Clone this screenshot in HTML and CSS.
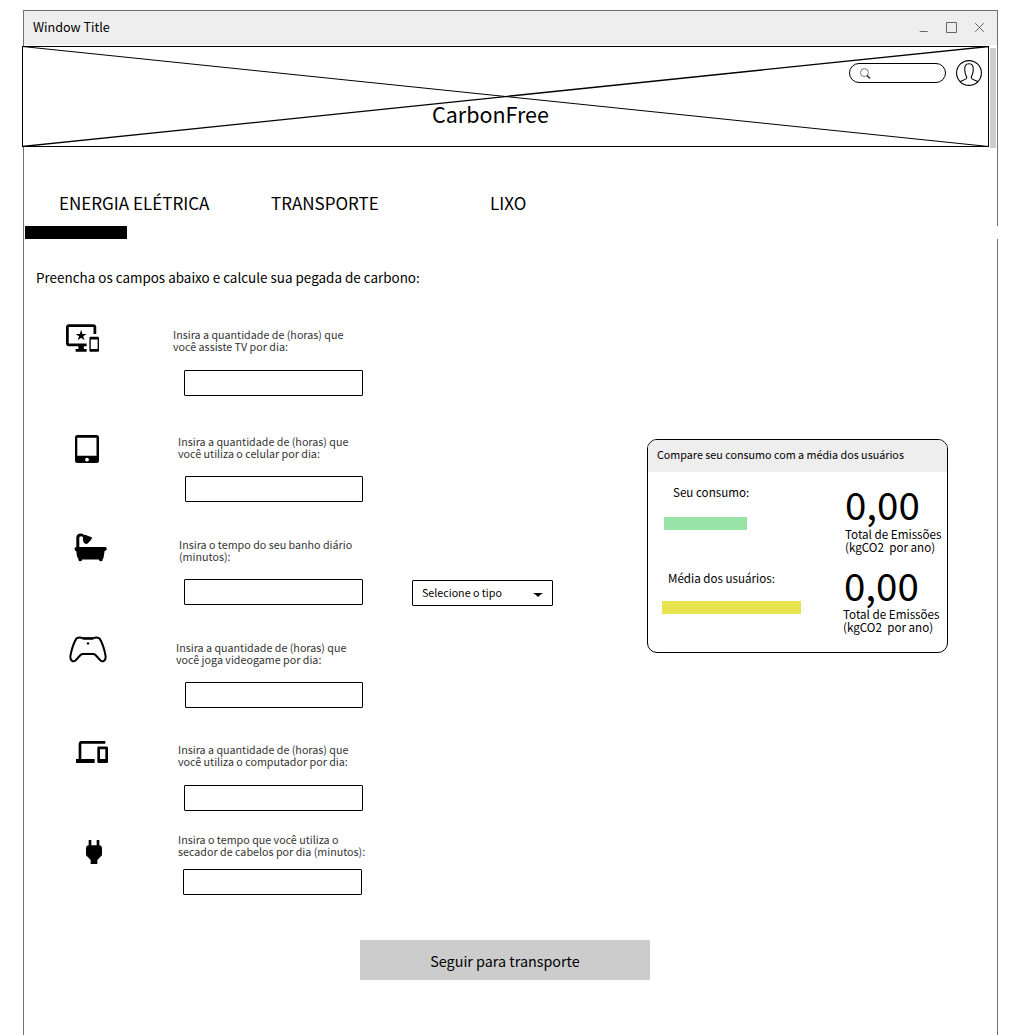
FILE: index.html
```html
<!DOCTYPE html>
<html lang="pt-BR">
<head>
<meta charset="utf-8">
<title>CarbonFree</title>
<link rel="stylesheet" href="styles.css">
</head>
<body>
<div class="window">
  <header class="titlebar">
    <span class="titlebar-text">Window Title</span>
    <svg class="controls" width="66" height="14" viewBox="0 0 66 14">
      <path d="M.7 10.5H8.700M27.500 1.500H37.500V11.500H27.500ZM56.200 2.200L64.800 10.800M64.800 2.200L56.200 10.800"/>
    </svg>
  </header>

  <div class="banner-row">
    <div class="banner">
      <svg class="cross" viewBox="0 0 967 101" preserveAspectRatio="none">
        <path d="M0.500 0.500L966.500 100.500"/><path class="bold" d="M0.500 100.500L966.500 0.500"/>
      </svg>
      <h1 class="brand">CarbonFree</h1>
      <div class="banner-tools">
        <div class="search">
          <svg width="12" height="13" viewBox="0 0 12 13"><circle cx="4.400" cy="4.600" r="4"/><path class="handle" d="M7 7.400L10 10.600"/></svg>
        </div>
        <svg class="avatar" width="26" height="26" viewBox="0 0 26 26">
          <circle cx="13" cy="13" r="12.400"/>
          <path d="M4.200 21.800C6 20.200 10.500 20 10.800 17.800C11 16 8.800 15 8.800 10.500C8.300 6 9.500 3.800 13 3.800S17.700 6 17.200 10.500C17.200 15 15 16 15.200 17.800C15.500 20 20 20.200 21.800 21.800"/>
        </svg>
      </div>
    </div>
    <div class="scrollbar"></div>
  </div>

  <nav class="tabs">
    <a class="tab tab-energy">ENERGIA ELÉTRICA</a>
    <a class="tab tab-transport">TRANSPORTE</a>
    <a class="tab">LIXO</a>
  </nav>
  <div class="track"><div class="track-fill"></div></div>

  <p class="intro">Preencha os campos abaixo e calcule sua pegada de carbono:</p>

  <main class="main">
    <form class="form">
      <div class="field field-tv">
        <div class="icon"><svg width="33" height="28" viewBox="0 2 24 20"><path d="M23 11.010L18 11c-.55 0-1 .45-1 1v9c0 .55.45 1 1 1h5c.55 0 1-.45 1-1v-9c0-.55-.45-.99-1-.99zM23 20h-5v-7h5v7zM20 2H2C.89 2 0 2.890 0 4v12c0 1.100.89 2 2 2h7v2H7v2h8v-2h-2v-2h2v-2H2V4h18v5h2V4c0-1.110-.9-2-2-2zm-8.030 7L11 6l-.97 3H7l2.470 1.760-.94 2.910 2.470-1.800 2.470 1.800-.94-2.910L15 9h-3.030z"/></svg></div>
        <div class="control">
          <label>Insira a quantidade de (horas) que<br>você assiste TV por dia:</label>
          <div class="input"></div>
        </div>
      </div>
      <div class="field field-phone">
        <div class="icon"><svg width="24" height="28" viewBox="0 0 24 28"><path fill-rule="evenodd" d="M2.500 0H21.500Q24 0 24 2.500V25.500Q24 28 21.500 28H2.500Q0 28 0 25.500V2.500Q0 0 2.500 0ZM2.300 2.800V20.800H21.500V2.800ZM12 22.700a1.900 1.900 0 1 0 .01 0Z"/></svg></div>
        <div class="control">
          <label>Insira a quantidade de (horas) que<br>você utiliza o celular por dia:</label>
          <div class="input"></div>
        </div>
      </div>
      <div class="field field-bath">
        <div class="icon"><svg width="33" height="29" viewBox="0 0 33 29"><path d="M2.300 15V4.500C2.300 .5 7.500-.8 9.800 2L11 1.700L18.200 4.600C17.500 7 15 9.500 12.500 11.300L10.200 10C8.800 8 8.800 6 9 4.200C7.500 2.500 5.300 3 5.300 5.200V14H31.500Q33 14.500 32.600 17L30.600 18L29.500 25L28.600 26.200V27.500Q28 28.500 26.500 28.300Q25 28.300 24.900 26.500H8V27.500Q7 28.700 5.300 28Q4.300 27.500 4.500 26L3 23.500L2.300 18.200Q.5 18 .5 15.500Q.5 14 2.300 14Z"/></svg></div>
        <div class="control">
          <label>Insira o tempo do seu banho diário<br>(minutos):</label>
          <div class="input"></div>
        </div>
        <div class="select"><span>Selecione o tipo</span><svg width="10" height="4" viewBox="0 0 9 4" preserveAspectRatio="none"><path d="M0 0H9Q7 1 4.500 4Q2 1 0 0Z"/></svg></div>
      </div>
      <div class="field field-game">
        <div class="icon"><svg class="outline" width="38" height="27" viewBox="0 0 38 27"><path d="M7.500 2.400C9.500 1.300 12 1.300 13.700 2.300H24.300C26 1.300 28.500 1.300 30.500 2.400C33.500 7 35.500 14 36.600 20C37 24.500 34 26.500 31.500 24.500L26.500 19Q25.500 18 24 18H14Q12.500 18 11.500 19L6.500 24.500C4 26.500 1 24.500 1.400 20C2.500 14 4.500 7 7.500 2.400Z"/><path class="accent" d="M14 2.600H24"/><circle cx="19" cy="7.400" r="1.200"/></svg></div>
        <div class="control">
          <label>Insira a quantidade de (horas) que<br>você joga videogame por dia:</label>
          <div class="input"></div>
        </div>
      </div>
      <div class="field field-computer">
        <div class="icon"><svg width="32" height="22" viewBox="0 4 24 16" preserveAspectRatio="none"><path d="M4 6h18V4H4c-1.100 0-2 .9-2 2v11H0v3h14v-3H4V6zm19 2h-6c-.55 0-1 .45-1 1v10c0 .55.45 1 1 1h6c.55 0 1-.45 1-1V9c0-.55-.45-1-1-1zm-1 9h-4v-7h4v7z"/></svg></div>
        <div class="control">
          <label>Insira a quantidade de (horas) que<br>você utiliza o computador por dia:</label>
          <div class="input"></div>
        </div>
      </div>
      <div class="field field-dryer">
        <div class="icon"><svg width="16" height="24" viewBox="6 3 12 18"><path d="M16.010 7L16 3h-2v4h-4V3H8v4h-.01C7 6.990 6 7.990 6 8.990v5.490L9.500 18v3h5v-3l3.500-3.510v-5.500c0-1-1-2-1.990-1.990z"/></svg></div>
        <div class="control">
          <label>Insira o tempo que você utiliza o<br>secador de cabelos por dia (minutos):</label>
          <div class="input"></div>
        </div>
      </div>
    </form>

    <aside class="card">
      <h2 class="card-title">Compare seu consumo com a média dos usuários</h2>
      <div class="card-body">
        <div class="bars">
          <div class="bar-label mine">Seu consumo:</div>
          <div class="bar bar-mine"></div>
          <div class="bar-label average">Média dos usuários:</div>
          <div class="bar bar-average"></div>
        </div>
        <div class="totals">
          <div class="total">
            <div class="number">0,00</div>
            <div class="unit">Total de Emissões<br>(kgCO2&nbsp; por ano)</div>
          </div>
          <div class="total total-average">
            <div class="number">0,00</div>
            <div class="unit">Total de Emissões<br>(kgCO2&nbsp; por ano)</div>
          </div>
        </div>
      </div>
    </aside>
  </main>

  <button class="next" type="button">Seguir para transporte</button>
</div>
</body>
</html>
```
FILE: styles.css
```css
* { box-sizing: border-box; }
body {
  margin: 0;
  padding: 10px 16px 0 23px;
  height: 1035px;
  overflow: hidden;
  background: #fff;
  color: #000;
  font-family: "Noto Sans CJK SC", "Noto Sans", sans-serif;
}
h1, h2, p { margin: 0; font-weight: 400; }
svg { display: block; flex: none; }

.window {
  width: 975px;
  height: 1025px;
  border: 1px solid #707070;
  border-bottom: 0;
}
.titlebar {
  display: flex;
  justify-content: space-between;
  height: 34px;
  padding: 0 12px 0 9px;
  background: #eee;
}
.titlebar-text { font-size: 12.600px; line-height: 31px; }
.controls { margin-top: 10px; fill: none; stroke: #666; }

.banner-row { display: flex; gap: 1px; margin: 1px 0 0 -2px; }
.banner {
  position: relative;
  display: flex;
  justify-content: space-between;
  width: 967px;
  height: 101px;
  padding: 13px 6px 0 409px;
  border: 1px solid #000;
  background: #fff;
}
.cross {
  position: absolute;
  top: -1px;
  left: -1px;
  width: 967px;
  height: 101px;
  fill: none;
  stroke: #000;
}
.cross .bold { stroke-width: 1.3; }
.brand { margin-top: 38px; font-size: 21.500px; line-height: 31px; }
.banner-tools { position: relative; display: flex; gap: 10px; }
.search {
  width: 97px;
  height: 20px;
  margin-top: 3px;
  padding: 4px 0 0 10px;
  border: 1px solid #000;
  border-radius: 10px;
}
.search svg { fill: none; stroke: #555; stroke-width: .8; }
.search .handle { stroke: #222; stroke-width: 1.400; }
.avatar { fill: none; stroke: #000; stroke-width: 1.100; }
.scrollbar { width: 6px; height: 100px; margin-top: 2px; background: #ccc; }

.tabs { display: flex; height: 78px; padding: 42px 0 0 35px; }
.tab { font-size: 17px; line-height: 25px; white-space: nowrap; }
.tab-energy { width: 212px; }
.tab-transport { width: 219px; }
.track { height: 13px; margin-right: -1px; padding-left: 1px; background: #fff; }
.track-fill { width: 102px; height: 13px; background: #000; }

.intro { margin: 28px 0 0 12px; font-size: 13.450px; line-height: 20px; white-space: nowrap; }

.main { display: flex; align-items: flex-start; margin-top: 42px; }
.form { width: 623px; }
.field { display: flex; height: 67px; }
.icon { width: 149px; padding-left: 42px; }
.control label {
  display: block;
  font-size: 10.730px;
  line-height: 12px;
  color: #333;
  white-space: nowrap;
}
.input { width: 179px; height: 26px; margin: 17px 0 0 11px; border: 1px solid #000; border-radius: 1px; }

.field-tv .icon svg { margin-top: -5px; }
.field-phone { height: 66px; margin-top: 40px; }
.field-phone .icon { width: 154px; padding-left: 51px; }
.field-phone .icon svg { margin-top: -1px; }
.field-phone .input { width: 178px; margin: 16px 0 0 7px; }
.field-bath { height: 66px; margin-top: 37px; }
.field-bath .icon { width: 155px; padding-left: 49.500px; }
.field-bath .icon svg { margin-top: -6px; }
.field-bath .control { width: 184px; }
.field-bath .input { margin: 16px 0 0 5px; }
.field-game { height: 66px; margin-top: 37px; }
.field-game .icon { width: 152px; padding-left: 44.500px; }
.field-game .icon svg { margin-top: -6px; }
.field-game .input { width: 178px; margin: 16px 0 0 9px; }
.field-computer { margin-top: 36px; }
.field-computer .icon { width: 154px; padding-left: 52px; }
.field-computer .icon svg { margin-top: -3px; }
.field-computer .input { margin-left: 6px; }
.field-dryer { height: 61px; margin-top: 23px; }
.field-dryer .icon { width: 154px; padding-left: 62px; }
.field-dryer .icon svg { margin-top: 6px; }
.field-dryer .input { margin: 11px 0 0 5px; }

.outline { fill: none; stroke: #000; stroke-width: 2; }
.outline .accent { stroke-width: 2.200; }
.outline circle { fill: #000; stroke: none; }

.select {
  display: flex;
  justify-content: space-between;
  align-items: flex-start;
  width: 141px;
  height: 26px;
  margin: 41px 0 0 49px;
  padding: 0 9px;
  border: 1px solid #000;
  border-radius: 1px;
  font-size: 10.700px;
  line-height: 24px;
}
.select svg { margin-top: 12px; }

.card {
  width: 301px;
  height: 214px;
  margin-top: 110px;
  border: 1px solid #000;
  border-radius: 10px;
  overflow: hidden;
  white-space: nowrap;
}
.card-title {
  height: 32px;
  padding-left: 9px;
  background: #eee;
  font-size: 10.750px;
  line-height: 30px;
}
.card-body { display: flex; }
.bars { width: 195px; padding: 10px 0 0 14px; }
.bar-label { font-size: 11.600px; line-height: 20px; }
.mine { padding-left: 11px; }
.average { padding-left: 6px; margin-top: 38px; }
.bar { height: 13px; }
.bar-mine { width: 83px; margin: 15px 0 0 2px; background: #98e4a8; }
.bar-average { width: 139px; margin-top: 13px; background: #e8e450; }
.totals { padding-top: 10px; }
.number { margin-left: 2px; font-size: 38.500px; line-height: 42px; }
.unit { margin: 3px 0 0 2px; font-size: 11.650px; line-height: 13px; }
.total { height: 81px; }
.total-average .number { margin-left: 1px; }
.total-average .unit { margin: 2px 0 0; }

.next {
  display: block;
  width: 290px;
  height: 40px;
  margin: 45px 0 0 336px;
  padding: 1px 0 0;
  border: 0;
  background: #ccc;
  color: #000;
  font: 14.350px/39px "Noto Sans CJK SC", "Noto Sans", sans-serif;
}
```
